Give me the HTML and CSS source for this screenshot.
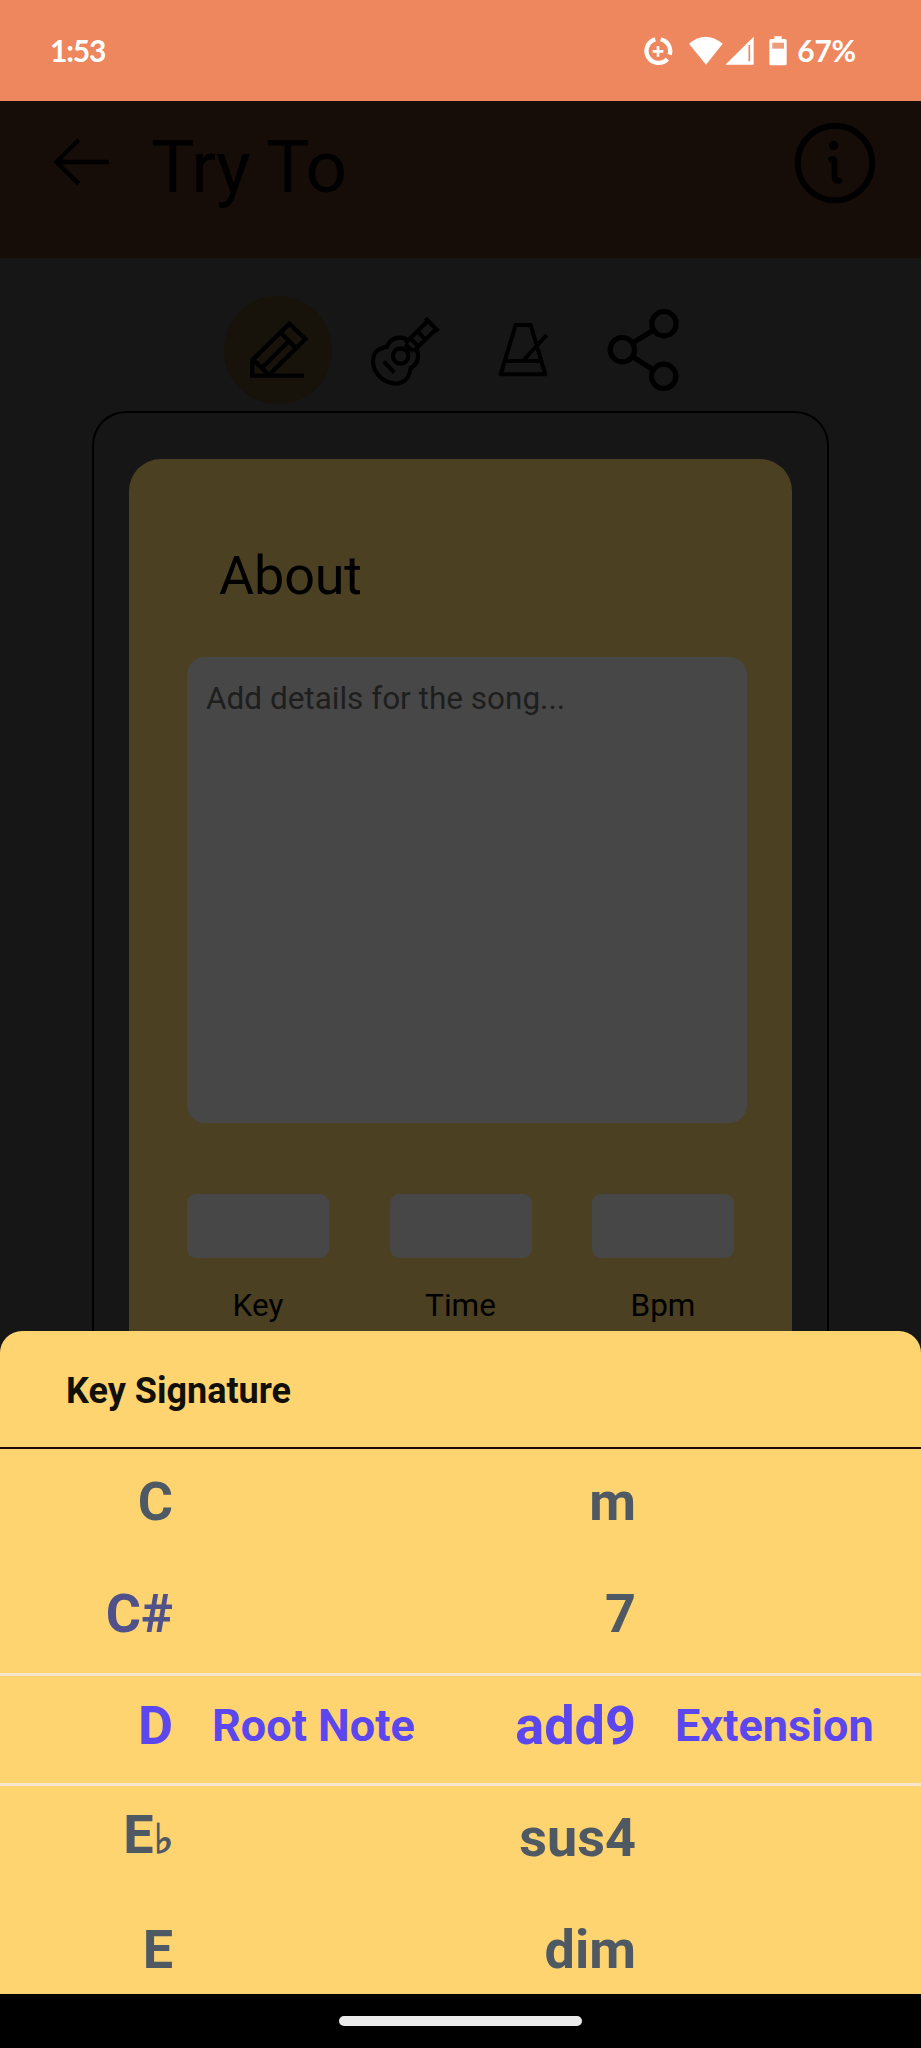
FILE: index.html
```html
<!DOCTYPE html>
<html lang="en">
<head>
<meta charset="utf-8">
<title>Try To</title>
<link rel="stylesheet" href="styles.css">
</head>
<body>
<div class="screen">
  <div class="status">
    <span class="clock">1:53</span>
    <div class="indicators">
      <svg class="i-data" width="30" height="30" viewBox="549 106 90 90" fill="none" stroke="#fff"><path d="M586 116A36 36 0 1 0 622 175M602 116A36 36 0 0 1 629 162" stroke-width="13"/><path d="M594 136v32M578 152h32" stroke-width="8"/></svg>
      <svg class="i-wifi" width="34" height="29" viewBox="687 106 102 87" fill="#fff"><path d="M687 129Q737 87 788 129L738 192Z"/></svg>
      <svg class="i-signal" width="29" height="29" viewBox="794 106 87 87"><path d="M795 192L880 108V192Z" fill="#fff"/><path d="M867 133V182" stroke="#ee875d" stroke-width="5"/></svg>
      <svg class="i-battery" width="18" height="30" viewBox="926 104 54 90"><path d="M942 105h22v8h10q5 0 5 5v69q0 5-5 5h-42q-5 0-5-5v-69q0-5 5-5h10z" fill="#fff"/><path d="M936 124h35v18h-35z" fill="#ee9b79"/></svg>
      <span class="percent">67%</span>
    </div>
  </div>

  <div class="header">
    <svg class="back" width="58" height="50" viewBox="158 411 174 150" fill="none" stroke="#000" stroke-width="13"><path d="M326 486H168M235 420L168 486L235 551"/></svg>
    <h1 class="title">Try To</h1>
    <svg class="info" width="84" height="84" viewBox="1003 362 252 252" fill="none" stroke="#000" stroke-linecap="round" stroke-linejoin="round"><circle cx="1129" cy="488" r="112" stroke-width="18"/><path d="M1118 477Q1128 473 1128 484V530Q1128 544 1142 541" stroke-width="18"/><circle cx="1125" cy="435" r="14" fill="#000" stroke="none"/></svg>
  </div>

  <div class="main">
    <div class="tools">
      <div class="tool-active">
        <svg width="60" height="60" viewBox="147 117 180 180" fill="none" stroke="#000" stroke-width="13"><path d="M312 287H157V240L268 131L316 177L206 286M240 155L287 204M185 265L263 187M158 238L207 285"/></svg>
      </div>
      <svg class="guitar" width="70" height="72" viewBox="510 105 210 216" fill="none" stroke="#000" stroke-width="12.5"><path d="M627 184C607 165 572 170 561 200C542 204 519 211 519 244C521 286 556 310 589 311C621 308 628 287 632 264C653 254 658 234 651 207"/><path d="M676 115L715 154M683 123L616 190M708 148L640 214M656 157L675 178M634 178L655 199M616 193L638 214"/><circle cx="602" cy="228" r="23"/><path d="M552 245L583 278"/></svg>
      <svg class="metronome" width="51" height="55" viewBox="115 126 153 165" fill="none" stroke="#000" stroke-width="12" stroke-linejoin="round"><path d="M168 135H213L257 283H123ZM137 243H246M192 240L261 165"/></svg>
      <svg class="share" width="72" height="84" viewBox="441 84 216 252" fill="none" stroke="#000" stroke-width="15.5"><circle cx="612" cy="131" r="36.500"/><circle cx="487" cy="209" r="36.500"/><circle cx="611" cy="289" r="36.500"/><path d="M518 189L581 150M518 230L580 270"/></svg>
    </div>

    <div class="frame">
      <div class="card">
        <h2 class="about">About</h2>
        <div class="details">Add details for the song...</div>
        <div class="fields">
          <div class="field"><div class="box"></div><span>Key</span></div>
          <div class="field"><div class="box"></div><span>Time</span></div>
          <div class="field"><div class="box"></div><span>Bpm</span></div>
        </div>
      </div>
    </div>
  </div>

  <div class="sheet">
    <div class="sheet-head">Key Signature</div>
    <div class="picker">
      <div class="row"><span class="opt">C</span><span></span><span class="opt">m</span></div>
      <div class="row"><span class="opt sharp">C#</span><span></span><span class="opt">7</span></div>
      <div class="row selected"><span class="opt">D</span><span class="label">Root Note</span><span class="opt">add9</span><span class="label">Extension</span></div>
      <div class="row"><span class="opt raised">E<span class="flat">♭</span></span><span></span><span class="opt">sus4</span></div>
      <div class="row"><span class="opt">E</span><span></span><span class="opt">dim</span></div>
      <div class="band"></div>
    </div>
  </div>

  <div class="nav"><div class="pill"></div></div>
</div>
</body>
</html>
```
FILE: styles.css
```css
* { box-sizing: border-box; }
body { margin: 0; background: #161616; font-family: Roboto, "Liberation Sans", sans-serif; }
svg { display: block; flex: none; }
.screen { width: 921px; height: 2048px; display: flex; flex-direction: column; overflow: hidden; }

.status { height: 101px; flex: none; background: #ee875d; color: #fff; display: flex; justify-content: space-between; padding: 0 65px 0 50px; }
.clock, .percent { font-family: Lato, Roboto, sans-serif; font-weight: 700; font-size: 30px; line-height: 101px; }
.clock { letter-spacing: -1.2px; }
.percent { letter-spacing: -0.2px; }
.indicators { display: flex; align-items: center; }
.i-data { margin-right: 16px; }
.i-wifi { margin-right: 2px; }
.i-signal { margin-right: 15px; }
.i-battery { margin-right: 10px; }

.header { height: 157px; flex: none; background: #170d08; display: flex; align-items: flex-start; padding-left: 53px; }
.back { margin-top: 36px; }
.title { margin: 23px 0 0 40px; font-size: 73px; line-height: 86px; font-weight: 400; letter-spacing: -0.6px; color: #000; width: 642px; }
.info { margin-top: 20px; }

.main { height: 1073px; flex: none; display: flex; flex-direction: column; background: #161616; }
.tools { height: 153px; flex: none; display: flex; align-items: flex-start; padding-left: 224px; }
.tool-active { width: 108px; height: 108px; margin-top: 38px; border-radius: 50%; background: #17120a; display: flex; padding: 23px 0 0 25px; }
.guitar { margin: 57px 0 0 38px; }
.metronome { margin: 64px 0 0 58px; }
.share { margin: 50px 0 0 58px; }

.frame { flex: 1; margin: 0 92px; border: 2px solid #000; border-bottom: 0; border-radius: 34px 34px 0 0; padding: 46px 35px 0 35px; }
.card { height: 100%; background: #4b4022; border-radius: 32px 32px 0 0; padding: 84px 45px 0 58px; }
.about { margin: 0 0 0 32px; font-size: 54px; line-height: 66px; font-weight: 400; letter-spacing: -0.2px; color: #000; }
.details { margin-top: 48px; height: 466px; border-radius: 18px; background: #474747; color: #1e1e1e; font-size: 31.5px; line-height: 40px; padding: 22px 19px; }
.fields { margin-top: 71px; display: flex; gap: 60.5px; }
.field { width: 142px; display: flex; flex-direction: column; align-items: center; font-size: 31.5px; line-height: 38px; color: #000; }
.box { width: 142px; height: 64px; border-radius: 9px; background: #474747; margin-bottom: 29px; }

.sheet { height: 663px; flex: none; background: #fed471; border-radius: 22px 22px 0 0; overflow: hidden; }
.sheet-head { height: 118px; border-bottom: 2px solid #1d0a08; padding: 37px 0 0 66px; font-size: 36px; line-height: 46px; font-weight: 700; color: #111008; }
.picker { position: relative; height: 545px; overflow: hidden; }
.row { height: 112px; display: grid; grid-template-columns: 173px 249px 214px 1fr; line-height: 105px; font-weight: 700; color: #4f5964; }
.opt { font-size: 54px; text-align: right; }
.sharp { color: #50518a; }
.raised { line-height: 99px; }
.flat { font-family: "DejaVu Sans", sans-serif; font-weight: 400; font-size: 41px; line-height: 1; -webkit-text-stroke: 1.3px currentColor; }
.selected { color: #5c46ee; }
.label { font-size: 45px; padding-left: 39px; white-space: nowrap; }
.band { position: absolute; left: 0; right: 0; top: 224px; height: 113px; border: solid #f8e6cc; border-width: 3px 0; }

.nav { height: 54px; flex: none; background: #000; display: flex; justify-content: center; padding-top: 22px; }
.pill { width: 243px; height: 10px; border-radius: 5px; background: #ebebeb; }
```
